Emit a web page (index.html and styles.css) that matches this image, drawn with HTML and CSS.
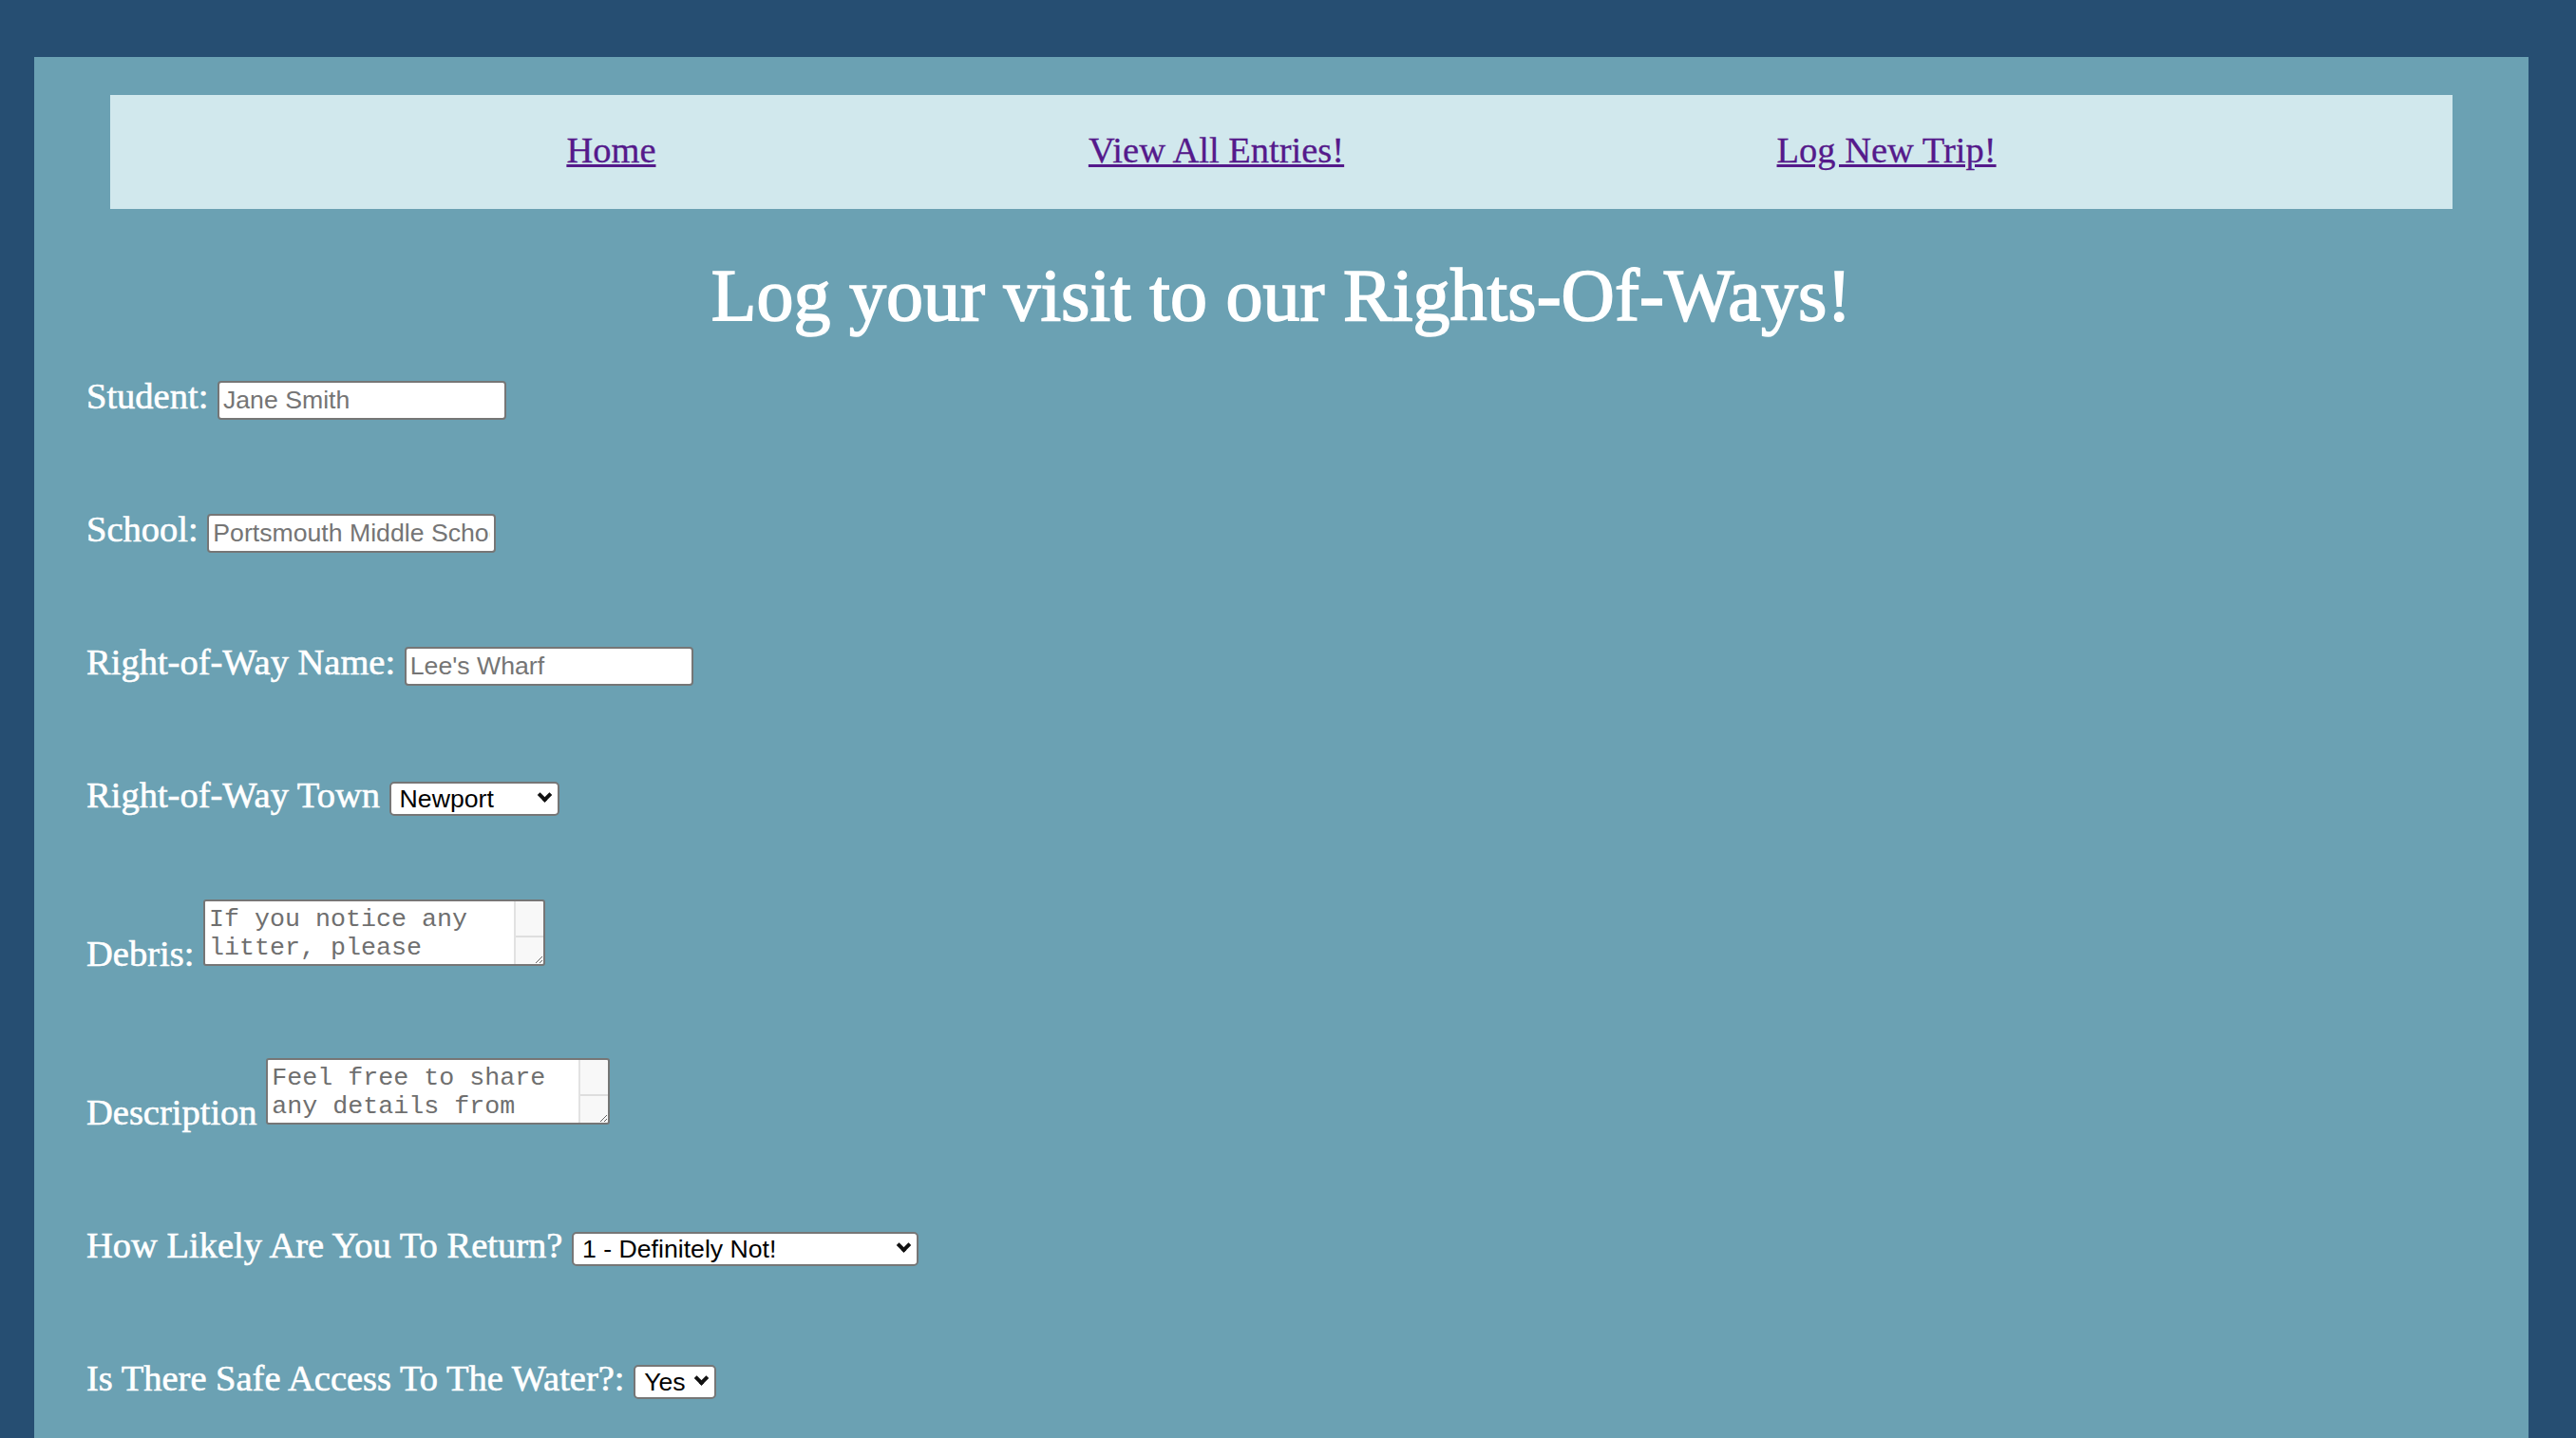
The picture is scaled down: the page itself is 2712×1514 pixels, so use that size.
FILE: index.html
```html
<!DOCTYPE html>
<html lang="en">
<head>
<meta charset="utf-8">
<title>Log New Trip</title>
<link rel="stylesheet" href="styles.css">
</head>
<body>
<div class="page">
  <nav class="topnav">
    <a class="navlink" href="#">Home</a>
    <a class="navlink" href="#">View All Entries!</a>
    <a class="navlink" href="#">Log New Trip!</a>
  </nav>
  <h1 class="title">Log your visit to our Rights-Of-Ways!</h1>
  <form class="trip-form">
    <div class="row"><label class="lbl" for="student">Student:</label> <input id="student" class="text-in" type="text" placeholder="Jane Smith"></div>
    <div class="row"><label class="lbl" for="school">School:</label> <input id="school" class="text-in" type="text" placeholder="Portsmouth Middle School"></div>
    <div class="row"><label class="lbl" for="rowname">Right-of-Way Name:</label> <input id="rowname" class="text-in" type="text" placeholder="Lee's Wharf"></div>
    <div class="row"><label class="lbl" for="town">Right-of-Way Town</label> <span class="sel"><select id="town" class="dropdown dd-town"><option>Newport</option><option>Portsmouth</option><option>Middletown</option></select></span></div>
    <div class="row"><label class="lbl" for="debris">Debris:</label> <textarea id="debris" class="area" placeholder="If you notice any litter, please describe it here!"></textarea></div>
    <div class="row"><label class="lbl" for="desc">Description</label> <textarea id="desc" class="area area-wide" placeholder="Feel free to share any details from your visit!"></textarea></div>
    <div class="row"><label class="lbl" for="ret">How Likely Are You To Return?</label> <span class="sel"><select id="ret" class="dropdown dd-return"><option>1 - Definitely Not!</option><option>2</option><option>3</option><option>4</option><option>5 - Definitely!</option></select></span></div>
    <div class="row"><label class="lbl" for="safe">Is There Safe Access To The Water?:</label> <span class="sel"><select id="safe" class="dropdown dd-yes"><option>Yes</option><option>No</option></select></span></div>
  </form>
</div>
</body>
</html>
```
FILE: styles.css
```css
html, body {
  margin: 0;
  padding: 0;
}
body {
  background: #264e72;
  font-family: "Liberation Serif", "Times New Roman", serif;
}
.page {
  margin: 60px 50px 0 36px;
  padding: 40px 55px 120px;
  background: #6ba1b3;
  min-height: 1500px;
  box-sizing: border-box;
}
.topnav {
  margin: 0 25px;
  height: 120px;
  padding: 0 25px 5px;
  box-sizing: border-box;
  background: #d1e8ed;
  display: flex;
  align-items: center;
  justify-content: space-evenly;
}
.navlink {
  font-size: 38.5px;
  color: #551a8b;
  text-decoration: underline;
  -webkit-text-stroke: 0.3px #551a8b;
}
.title {
  margin: 46px 0 31px;
  font-size: 78px;
  line-height: 90px;
  font-weight: normal;
  color: #fff;
  -webkit-text-stroke: 1.6px #fff;
  text-align: center;
}
.trip-form {
  display: flex;
  flex-direction: column;
  gap: 80px;
}
.row {
  font-size: 38.5px;
  line-height: 60px;
  color: #fff;
}
.lbl {
  -webkit-text-stroke: 0.6px #fff;
}
.text-in {
  box-sizing: border-box;
  width: 304px;
  height: 41px;
  padding: 0 4px;
  margin: 0;
  border: 2px solid #767676;
  border-radius: 4px;
  background: #fff;
  font-family: "Liberation Sans", Arial, sans-serif;
  font-size: 26.67px;
  color: #000;
  vertical-align: baseline;
}
.text-in::placeholder {
  color: #757575;
}
.sel {
  display: inline-flex;
  position: relative;
  line-height: normal;
  vertical-align: baseline;
}
.sel::after {
  content: "";
  position: absolute;
  right: 10px;
  top: 50%;
  width: 7px;
  height: 7px;
  border-right: 4px solid #111;
  border-bottom: 4px solid #111;
  transform: translateY(-9.5px) rotate(45deg);
  pointer-events: none;
}
.dropdown {
  -webkit-appearance: none;
  appearance: none;
  box-sizing: border-box;
  height: 36px;
  margin: 0;
  padding: 0 30px 0 9px;
  border: 2px solid #767676;
  border-radius: 5px;
  background: #fff;
  color: #000;
  font-family: "Liberation Sans", Arial, sans-serif;
  font-size: 26.67px;
}
.dd-town { width: 179px; }
.dd-return { width: 365px; }
.dd-yes { width: 87px; }
.area {
  box-sizing: border-box;
  width: 360px;
  height: 70px;
  margin: 0;
  padding: 4px 34px 4px 4px;
  border: 2px solid #767676;
  border-radius: 3px;
  font-family: "Liberation Mono", "Courier New", monospace;
  font-size: 26.67px;
  line-height: normal;
  color: #000;
  vertical-align: baseline;
  overflow: hidden;
  background:
    linear-gradient(#dedede, #dedede) right 0 bottom 28px / 29px 2px no-repeat,
    linear-gradient(to left, #f8f8f8 29px, #e2e2e2 29px, #e2e2e2 31px, #fff 31px);
}
.area-wide {
  width: 362px;
}
.area::placeholder {
  color: #6f6f6f;
}
```
